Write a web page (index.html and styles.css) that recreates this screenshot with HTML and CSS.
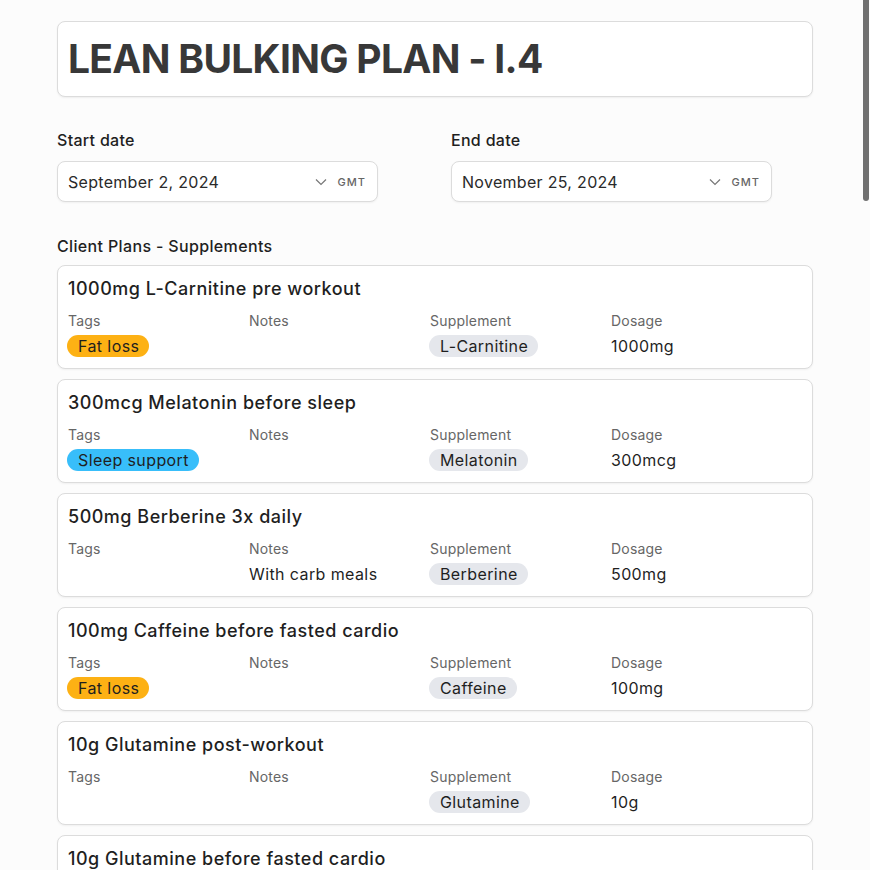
FILE: index.html
```html
<!DOCTYPE html>
<html>
<head>
<meta charset="utf-8">
<link rel="stylesheet" href="styles.css">
</head>
<body>
<div class="scrollbar"></div>
<main class="page">
  <div class="title-card"><h1>LEAN BULKING PLAN - I.4</h1></div>

  <div class="dates">
    <div class="date-field">
      <label>Start date</label>
      <div class="date-input">
        <span class="date-value">September 2, 2024</span>
        <svg class="chev" width="12" height="8" viewBox="0 0 12 8"><path d="M1 1.5l5 5 5-5" fill="none" stroke="#777" stroke-width="1.2"/></svg>
        <span class="tz">GMT</span>
      </div>
    </div>
    <div class="date-field">
      <label>End date</label>
      <div class="date-input">
        <span class="date-value">November 25, 2024</span>
        <svg class="chev" width="12" height="8" viewBox="0 0 12 8"><path d="M1 1.5l5 5 5-5" fill="none" stroke="#777" stroke-width="1.2"/></svg>
        <span class="tz">GMT</span>
      </div>
    </div>
  </div>

  <h2 class="section">Client Plans - Supplements</h2>

  <div class="list">
    <div class="card">
      <div class="card-title">1000mg L-Carnitine pre workout</div>
      <div class="grid">
        <div class="lbl">Tags</div><div class="lbl">Notes</div><div class="lbl">Supplement</div><div class="lbl">Dosage</div>
        <div class="val"><span class="pill orange">Fat loss</span></div><div class="val"></div><div class="val"><span class="pill gray">L-Carnitine</span></div><div class="val">1000mg</div>
      </div>
    </div>
    <div class="card">
      <div class="card-title">300mcg Melatonin before sleep</div>
      <div class="grid">
        <div class="lbl">Tags</div><div class="lbl">Notes</div><div class="lbl">Supplement</div><div class="lbl">Dosage</div>
        <div class="val"><span class="pill blue">Sleep support</span></div><div class="val"></div><div class="val"><span class="pill gray">Melatonin</span></div><div class="val">300mcg</div>
      </div>
    </div>
    <div class="card">
      <div class="card-title">500mg Berberine 3x daily</div>
      <div class="grid">
        <div class="lbl">Tags</div><div class="lbl">Notes</div><div class="lbl">Supplement</div><div class="lbl">Dosage</div>
        <div class="val"></div><div class="val">With carb meals</div><div class="val"><span class="pill gray">Berberine</span></div><div class="val">500mg</div>
      </div>
    </div>
    <div class="card">
      <div class="card-title">100mg Caffeine before fasted cardio</div>
      <div class="grid">
        <div class="lbl">Tags</div><div class="lbl">Notes</div><div class="lbl">Supplement</div><div class="lbl">Dosage</div>
        <div class="val"><span class="pill orange">Fat loss</span></div><div class="val"></div><div class="val"><span class="pill gray">Caffeine</span></div><div class="val">100mg</div>
      </div>
    </div>
    <div class="card">
      <div class="card-title">10g Glutamine post-workout</div>
      <div class="grid">
        <div class="lbl">Tags</div><div class="lbl">Notes</div><div class="lbl">Supplement</div><div class="lbl">Dosage</div>
        <div class="val"></div><div class="val"></div><div class="val"><span class="pill gray">Glutamine</span></div><div class="val">10g</div>
      </div>
    </div>
    <div class="card">
      <div class="card-title">10g Glutamine before fasted cardio</div>
      <div class="grid">
        <div class="lbl">Tags</div><div class="lbl">Notes</div><div class="lbl">Supplement</div><div class="lbl">Dosage</div>
        <div class="val"></div><div class="val"></div><div class="val"><span class="pill gray">Glutamine</span></div><div class="val">10g</div>
      </div>
    </div>
  </div>
</main>
</body>
</html>
```
FILE: styles.css
```css
html, body {
  margin: 0;
  padding: 0;
  background: #fcfcfc;
  font-family: Inter, "Noto Sans", sans-serif;
  color: #1f1f1f;
  overflow: hidden;
  height: 870px;
}
.scrollbar {
  position: fixed;
  top: 0;
  right: 1px;
  width: 6px;
  height: 201px;
  background: #707070;
  border-radius: 0 0 3px 3px;
}
.page {
  width: 756px;
  padding: 21px 0 0 57px;
}
.title-card {
  height: 74px;
  background: #fff;
  border: 1px solid #dcdcdc;
  border-radius: 8px;
  box-shadow: 0 1px 2px rgba(0,0,0,0.06);
  display: flex;
  align-items: center;
  padding: 0 10px;
}
h1 {
  margin: -2px 0 0;
  font-size: 39px;
  font-weight: 700;
  color: #383838;
  letter-spacing: -0.7px;
}
.dates {
  display: grid;
  grid-template-columns: 362px 362px;
  column-gap: 32px;
  margin-top: 33px;
}
.date-field label {
  display: block;
  font-size: 16px;
  font-weight: 500;
  color: #1f1f1f;
  line-height: 20px;
  letter-spacing: 0.3px;
  margin-bottom: 11px;
}
.date-input {
  width: 321px;
  height: 41px;
  box-sizing: border-box;
  background: #fff;
  border: 1px solid #dcdcdc;
  border-radius: 8px;
  box-shadow: 0 1px 2px rgba(0,0,0,0.05);
  display: flex;
  align-items: center;
  padding: 0 11px 0 10px;
}
.date-value {
  font-size: 16px;
  color: #2a2a2a;
  letter-spacing: 0.3px;
  flex: 1;
}
.chev { margin-right: 11px; }
.tz {
  font-size: 11px;
  letter-spacing: 1px;
  color: #666;
  font-weight: 500;
}
.section {
  margin: 34px 0 9px;
  font-size: 16px;
  font-weight: 500;
  color: #1f1f1f;
  line-height: 20px;
  letter-spacing: 0.35px;
}
.list {
  display: flex;
  flex-direction: column;
  gap: 10px;
}
.card {
  height: 104px;
  box-sizing: border-box;
  background: #fff;
  border: 1px solid #dcdcdc;
  border-radius: 8px;
  box-shadow: 0 1px 2px rgba(0,0,0,0.05);
  padding: 11px 10px 0 10px;
}
.card-title {
  font-size: 18px;
  font-weight: 500;
  color: #1f1f1f;
  line-height: 24px;
  letter-spacing: 0.5px;
}
.grid {
  margin-top: 12px;
  display: grid;
  grid-template-columns: repeat(4, 181px);
  row-gap: 6px;
}
.lbl {
  font-size: 14px;
  color: #666;
  line-height: 16px;
  letter-spacing: 0.2px;
}
.val {
  font-size: 16px;
  color: #1f1f1f;
  line-height: 22px;
  height: 22px;
  letter-spacing: 0.4px;
}
.pill {
  display: inline-block;
  border-radius: 11px;
  padding: 0 10px 0 11px;
  margin-left: -1px;
  line-height: 22px;
}
.orange { background: #fdb114; }
.blue { background: #38befa; }
.gray { background: #e5e7ec; }
```
